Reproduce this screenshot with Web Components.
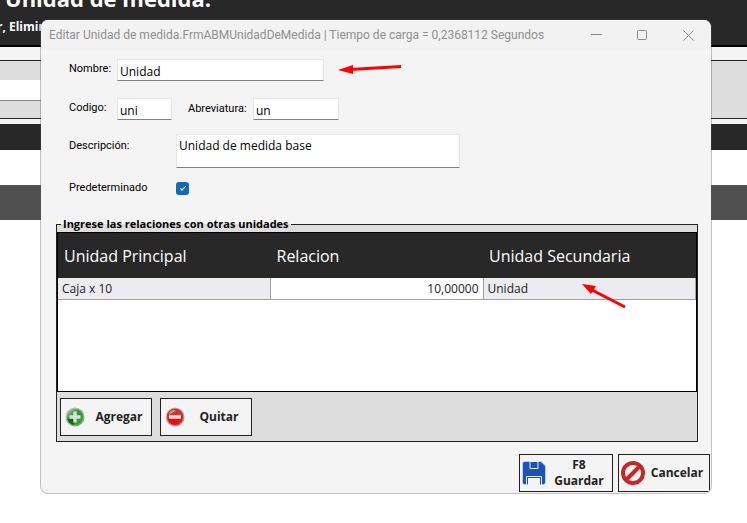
<!DOCTYPE html>
<html lang="es">
<head>
<meta charset="utf-8">
<title>Unidad de medida</title>
<style>
body {
  margin: 0;
  min-height: 100vh;
  position: relative;
  background: #fff;
  color: #000;
  font: 12px/16px "Open Sans", "Noto Sans", sans-serif;
}

edit-window {
  position: absolute;
  top: 19px;
  left: 40px;
  right: 35px;
}
</style>
</head>
<body>

<units-page></units-page>

<edit-window caption="Editar Unidad de medida.FrmABMUnidadDeMedida | Tiempo de carga = 0,2368112 Segundos">
  <unit-form></unit-form>
  <relations-box></relations-box>
  <tool-button slot="actions" icon="save">F8<br>Guardar</tool-button>
  <tool-button slot="actions" icon="cancel">Cancelar</tool-button>
</edit-window>

<script>
const icons = {
    add: `<svg width="20" height="20" viewBox="0 0 20 20">
<defs><linearGradient id="rim" x2="1" y2="1"><stop offset="0" stop-color="#ccc"/><stop offset="1" stop-color="#888"/></linearGradient>
<linearGradient id="g" x2="1" y2="1"><stop offset="0" stop-color="#9cc79c"/><stop offset=".45" stop-color="#2f952f"/><stop offset="1" stop-color="#1dba1d"/></linearGradient></defs>
<circle cx="10" cy="10" r="9.5" fill="url(#rim)"/><circle cx="10" cy="10" r="8" fill="url(#g)"/>
<path d="M2.2 11.5Q6 12 9 10V17.8A8 8 0 0 1 2.2 11.5" fill="#087208"/>
<path d="M8.3 4.5h3.4v3.8h3.8v3.4h-3.8v3.8H8.3v-3.8H4.5V8.3h3.8z" fill="#ddd"/></svg>`,
    remove: `<svg width="20" height="20" viewBox="0 0 20 20">
<defs><linearGradient id="rim" x2="1" y2="1"><stop offset="0" stop-color="#ccc"/><stop offset="1" stop-color="#888"/></linearGradient></defs>
<circle cx="10" cy="10" r="9.5" fill="url(#rim)"/><circle cx="10" cy="10" r="8" fill="#f00c0c"/>
<path d="M2 10a8 8 0 0 1 16-1Q10 8 2 12z" fill="#cf3434"/><path d="M5 4.5Q8 2 11 3.5L4 8z" fill="#df8b8b"/>
<path d="M4 8.3h12v3.4H4z" fill="#ddd"/></svg>`,
    save: `<svg width="24" height="24" viewBox="0 0 24 24">
<path d="M2 .5h17L23.5 5v17L22 23.5H2L.5 22V2z" fill="#1f52b5" stroke="#b9cbea"/>
<path d="M8 .5h8v7H8z" fill="#1f52b5" stroke="#e6eef8"/><path d="M9 0h6v1H9z" fill="#e9edf5"/>
<path d="M4.5 24v-8.500h15V24z" fill="#1f52b5" stroke="#e6eef8"/><path d="M6 17h12v7H6z" fill="#f4f4f4"/></svg>`,
    cancel: `<svg width="24" height="24" viewBox="0 0 24 24">
<circle cx="12" cy="12" r="10" fill="none" stroke="#c62828" stroke-width="4"/><path d="M5 19L19 5" stroke="#c62828" stroke-width="4"/></svg>`
}

// the list window behind the dialog
customElements.define('units-page', class extends HTMLElement {
    constructor() {
        super()
        let sr = this.attachShadow({mode: 'open'})
        sr.innerHTML = `
<style>
:host { display: block; }
header {
  height: 45px;
  display: flex;
  flex-direction: column;
  justify-content: flex-end;
  gap: 8px;
  overflow: hidden;
  background: #282828;
  border-bottom: 2px solid #000;
  color: #fff;
  white-space: nowrap;
}
h1 { margin: 0 0 0 5px; font-size: 22px; line-height: 26px; }
p { margin: 0 0 10px -3px; font-weight: bold; }
.filters {
  background: #f4f4f4;
  padding: 13px 0 5px;
}
.panel {
  display: flex;
  background: #ddd;
  border: solid #222;
  border-width: 1px 0;
  height: 57px;
  align-items: center;
}
input {
  width: 60px;
  height: 21px;
  margin: 2px 0 0;
  box-sizing: border-box;
  border: 0;
  border-bottom: 1px solid #808080;
  background: #fff;
}
.head { height: 26px; background: #282828; }
.row { height: 35px; }
.selected { background: #505050; }
</style>
<header><h1>Unidad de medida.</h1><p>r, Elimin</p></header>
<div class="filters"><div class="panel"><input aria-label="Buscar"></div></div>
<div class="head"></div>
<div class="row"></div>
<div class="row selected"></div>`
    }
})

customElements.define('edit-window', class extends HTMLElement {
    constructor() {
        super()
        let sr = this.attachShadow({mode: 'open'})
        sr.innerHTML = `
<style>
:host {
  display: block;
  background: #f4f4f4;
  background-clip: padding-box;
  border: 1px solid rgba(80, 80, 80, .35);
  border-radius: 8px;
  overflow: hidden;
}
header {
  display: flex;
  align-items: center;
  height: 30px;
  padding: 0 16px 0 8px;
  background: #f2f2f2;
  color: #8f8f8f;
}
h2 { flex: 1; margin: 0; font: 12px/16px Roboto, sans-serif; white-space: nowrap; }
nav { display: flex; gap: 33px; }
button { border: 0; padding: 0; background: none; width: 13px; height: 13px; display: flex; }
svg { fill: none; stroke: #8a8a8a; }
footer {
  display: flex;
  justify-content: flex-end;
  gap: 5px;
  padding: 12px 1px 1px;
}
</style>
<header>
  <h2></h2>
  <nav>
    <button aria-label="Minimizar"><svg width="13" height="13"><path d="M1 5.500h11"/></svg></button>
    <button aria-label="Maximizar"><svg width="13" height="13"><rect x="1.500" y="1.500" width="9" height="9" rx="1"/></svg></button>
    <button aria-label="Cerrar"><svg width="13" height="13"><path d="M1.500 1.500l10 10M11.500 1.500l-10 10"/></svg></button>
  </nav>
</header>
<slot></slot>
<footer><slot name="actions"></slot></footer>`
        sr.querySelector('h2').textContent = this.getAttribute('caption')
    }
})

customElements.define('tool-button', class extends HTMLElement {
    constructor() {
        super()
        let sr = this.attachShadow({mode: 'open'})
        sr.innerHTML = `
<style>
:host { display: block; }
:host([icon=save]) button { min-width: 94px; }
:host([icon=add]), :host([icon=remove]) { --icon-space: 2px; }
button {
  display: flex;
  align-items: center;
  min-width: 92px;
  height: 38px;
  padding: 0 4px 0 2px;
  border: 1px solid #222;
  background: #f4f4f4;
  color: #222;
  font: bold 12px/16px "Open Sans", sans-serif;
}
svg { margin: 0 var(--icon-space, 0); }
span { flex: 1; text-align: center; padding-left: 4px; }
</style>
<button>${icons[this.getAttribute('icon')]}<span><slot></slot></span></button>`
    }
})

customElements.define('red-arrow', class extends HTMLElement {
    constructor() {
        super()
        let sr = this.attachShadow({mode: 'open'})
        let steep = this.hasAttribute('steep')
        sr.innerHTML = `
<style>:host { display: block; } svg { display: block; fill: #f00; stroke: #f00; }</style>
` + (steep
            ? `<svg width="46" height="26"><path d="M10 6L43 23" stroke-width="3"/><path d="M0 0l14 2-5 8z" stroke="none"/></svg>`
            : `<svg width="64" height="10"><path d="M12 5.500L63 2.500" stroke-width="3"/><path d="M0 6L15 1v9z" stroke="none"/></svg>`)
    }
})

customElements.define('unit-form', class extends HTMLElement {
    constructor() {
        super()
        let sr = this.attachShadow({mode: 'open'})
        sr.innerHTML = `
<style>
:host { display: block; padding: 9px 28px 0; }
.line { display: flex; align-items: center; margin-bottom: 17px; }
label { font: 11px/16px Roboto, sans-serif; white-space: nowrap; padding-bottom: 3px; }
.short { width: 48px; }
.long { width: 107px; }
.mid { margin-left: 16px; width: 65px; padding: 0; }
input[type=text], textarea {
  box-sizing: border-box;
  height: 22px;
  margin: 0;
  padding: 2px 2px 0;
  border: 1px solid #e6e6e6;
  border-bottom-color: #808080;
  background: #fff;
  color: #000;
  font: 12px/16px "Open Sans", sans-serif;
}
textarea { width: 284px; height: 34px; padding-top: 3px; resize: none; overflow: hidden; }
#name { width: 207px; }
#code { width: 55px; }
#abbr { width: 86px; }
.pair { margin-bottom: 14px; }
.top { align-items: flex-start; margin-bottom: 12px; }
.top label { padding-top: 4px; }
.last { margin-bottom: 20px; }
.last label { padding: 0; }
red-arrow { margin-left: 14px; padding-bottom: 3px; }
input[type=checkbox] {
  appearance: none;
  width: 13px;
  height: 13px;
  margin: 0;
  border-radius: 3px;
  background: #1568b8;
  display: grid;
  place-items: center;
}
input[type=checkbox]:checked::before {
  content: "";
  width: 5px;
  height: 2px;
  margin-bottom: 2px;
  border: solid #fff;
  border-width: 0 0 1px 1px;
  transform: rotate(-45deg);
}
</style>
<div class="line">
  <label class="short" for="name">Nombre:</label>
  <input type="text" id="name" value="Unidad">
  <red-arrow></red-arrow>
</div>
<div class="line pair">
  <label class="short" for="code">Codigo:</label>
  <input type="text" id="code" value="uni">
  <label class="mid" for="abbr">Abreviatura:</label>
  <input type="text" id="abbr" value="un">
</div>
<div class="line top">
  <label class="long" for="desc">Descripción:</label>
  <textarea id="desc">Unidad de medida base</textarea>
</div>
<div class="line last">
  <label class="long" for="default">Predeterminado</label>
  <input type="checkbox" id="default" checked>
</div>`
    }
})

customElements.define('relations-box', class extends HTMLElement {
    constructor() {
        super()
        let sr = this.attachShadow({mode: 'open'})
        sr.innerHTML = `
<style>
:host { display: block; padding: 0 13px 0 15px; }
fieldset {
  margin: 0;
  padding: 0;
  min-width: 0;
  border: 1px solid #222;
  background: #ddd;
}
legend {
  margin-left: 4px;
  padding: 0 2px;
  font: bold 11px/16px "Open Sans", sans-serif;
}
.grid {
  position: relative;
  min-height: 158px;
  border: 1px solid #000;
  background: #fff;
}
table { width: 100%; border-collapse: collapse; table-layout: fixed; color: #222; }
th {
  height: 45px;
  padding: 0 6px;
  background: #282828;
  color: #fff;
  font-size: 16px;
  font-weight: normal;
  text-align: left;
}
td {
  height: 21px;
  padding: 0 4px;
  border: solid #a0a0a0;
  border-width: 0 1px 1px 0;
  background: #ebebf0;
}
td.number { background: #fff; text-align: right; }
red-arrow { position: absolute; right: 68px; top: 51px; }
.buttons { display: flex; gap: 8px; padding: 6px 3px 5px; }
</style>
<fieldset>
  <legend>Ingrese las relaciones con otras unidades</legend>
  <div class="grid">
    <table>
      <thead><tr><th>Unidad Principal</th><th>Relacion</th><th>Unidad Secundaria</th></tr></thead>
      <tbody><tr><td>Caja x 10</td><td class="number">10,00000</td><td>Unidad</td></tr></tbody>
    </table>
    <red-arrow steep></red-arrow>
  </div>
  <div class="buttons">
    <tool-button icon="add">Agregar</tool-button>
    <tool-button icon="remove">Quitar</tool-button>
  </div>
</fieldset>`
    }
})
</script>
</body>
</html>
